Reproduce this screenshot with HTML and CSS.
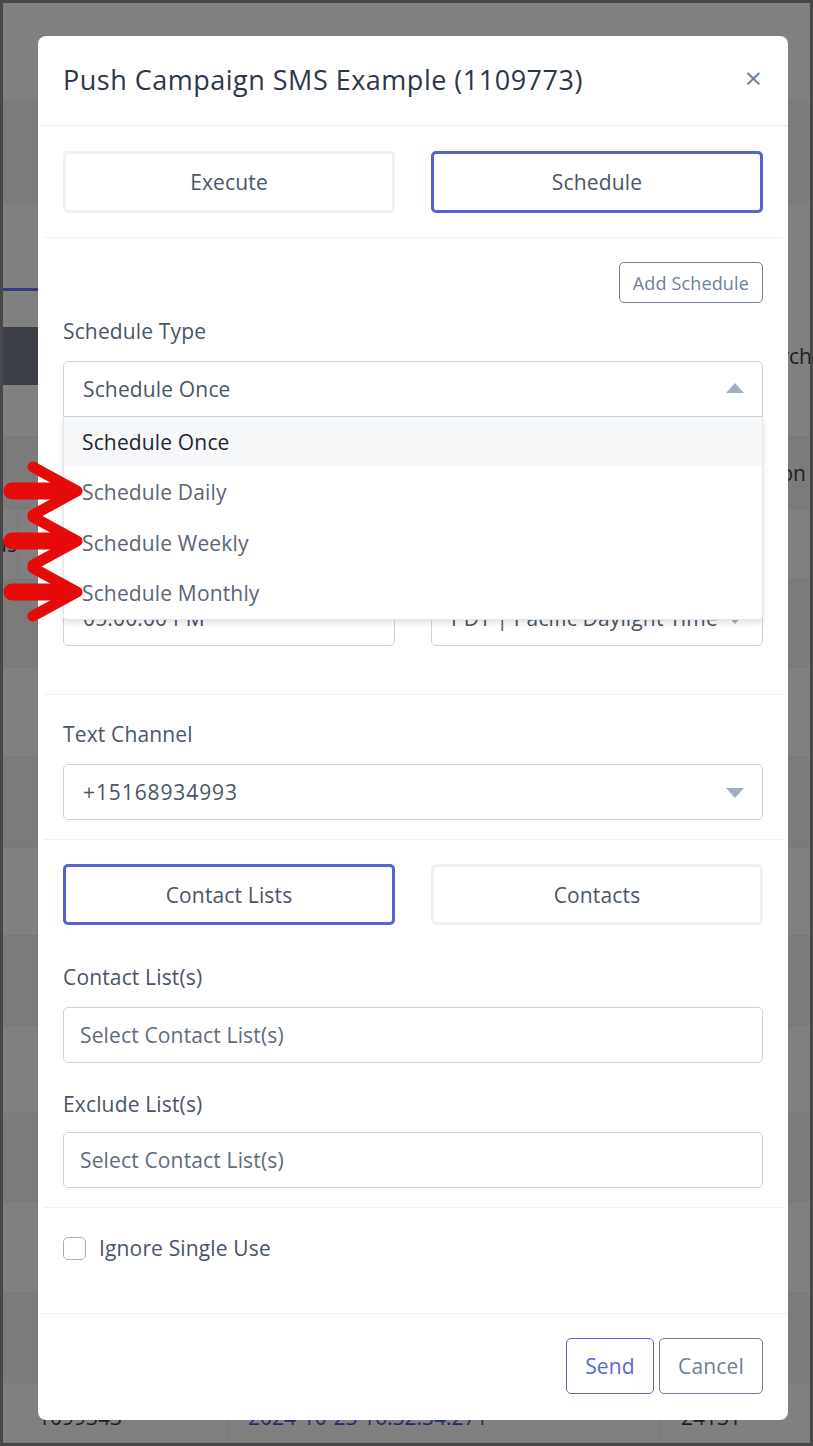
FILE: index.html
```html
<!DOCTYPE html>
<html lang="en">
<head>
<meta charset="utf-8">
<title>Push Campaign SMS Example</title>
<link rel="stylesheet" href="styles.css">
</head>
<body>
<div class="frame">
  <div class="page">
    <div class="band h97"></div>
    <div class="band h103 dim"></div>
    <div class="band h85"></div>
    <div class="tabline"></div>
    <div class="band h36"></div>
    <div class="band h58 toolbar">
      <div class="darkbtn"></div>
      <div class="search">Search</div>
    </div>
    <div class="band h52"></div>
    <div class="trow h72 dim"><span class="cell c1"></span><span class="cell c2"></span><span class="cell c3 txt-end">Action</span></div>
    <div class="trow h71"><span class="cell c1 txt-cut">Status</span><span class="cell c2"></span><span class="cell c3"></span></div>
    <div class="trow h88 dim"><span class="cell c1"></span><span class="cell c2"></span><span class="cell c3"></span></div>
    <div class="trow h89"><span class="cell c1"></span><span class="cell c2"></span><span class="cell c3"></span></div>
    <div class="trow h91 dim"><span class="cell c1"></span><span class="cell c2"></span><span class="cell c3"></span></div>
    <div class="trow h88"><span class="cell c1"></span><span class="cell c2"></span><span class="cell c3"></span></div>
    <div class="trow h90 dim"><span class="cell c1"></span><span class="cell c2"></span><span class="cell c3"></span></div>
    <div class="trow h88"><span class="cell c1"></span><span class="cell c2"></span><span class="cell c3"></span></div>
    <div class="trow h88 dim"><span class="cell c1"></span><span class="cell c2"></span><span class="cell c3"></span></div>
    <div class="trow h91"><span class="cell c1"></span><span class="cell c2"></span><span class="cell c3"></span></div>
    <div class="trow h90 dim"><span class="cell c1"></span><span class="cell c2"></span><span class="cell c3"></span></div>
    <div class="trow h60"><span class="cell c1"><span class="id">1099343</span></span><span class="cell c2"><span class="date">2024-10-23 16:32:34.271</span></span><span class="cell c3"><span class="id">24131</span></span></div>
  </div>

  <div class="modal">
    <div class="modal-header">
      <h1 class="modal-title">Push Campaign SMS Example (1109773)</h1>
      <span class="close">&#215;</span>
    </div>
    <div class="modal-body">
      <div class="section sec-mode">
        <div class="toggle-grid">
          <div class="toggle">Execute</div>
          <div class="toggle active">Schedule</div>
        </div>
      </div>

      <div class="section sec-schedule">
        <div class="add-row"><span class="btn-outline gray small">Add Schedule</span></div>
        <label class="label first">Schedule Type</label>
        <div class="select-wrap">
          <div class="select open"><span>Schedule Once</span><span class="caret up"></span></div>
          <div class="menu">
            <div class="menu-item hl">Schedule Once</div>
            <div class="menu-item">Schedule Daily</div>
            <div class="menu-item">Schedule Weekly</div>
            <div class="menu-item">Schedule Monthly</div>
          </div>
        </div>
        <div class="hidden-group">
          <label class="label">Start Date</label>
          <div class="input"><span>10/24/2024</span></div>
        </div>
        <div class="two-col">
          <div class="input"><span>05:00:00 PM</span></div>
          <div class="select"><span>PDT | Pacific Daylight Time</span><span class="caret down"></span></div>
        </div>
      </div>

      <div class="section sec-channel">
        <label class="label">Text Channel</label>
        <div class="select"><span class="digits">+15168934993</span><span class="caret down"></span></div>
      </div>

      <div class="section sec-contacts">
        <div class="toggle-grid short">
          <div class="toggle active">Contact Lists</div>
          <div class="toggle">Contacts</div>
        </div>
        <label class="label gap-big">Contact List(s)</label>
        <div class="input placeholder"><span>Select Contact List(s)</span></div>
        <label class="label gap-mid">Exclude List(s)</label>
        <div class="input placeholder"><span>Select Contact List(s)</span></div>
      </div>

      <div class="section sec-check">
        <div class="check-row"><span class="checkbox"></span><span>Ignore Single Use</span></div>
      </div>
    </div>
    <div class="modal-footer">
      <span class="btn-outline blue send">Send</span>
      <span class="btn-outline gray cancel">Cancel</span>
    </div>
  </div>

  <svg class="arrows" width="100" height="200" viewBox="0 0 100 200" aria-hidden="true">
    <g fill="none" stroke="#e60a0a" stroke-linecap="round" stroke-linejoin="round">
      <line x1="12" y1="38" x2="60" y2="38" stroke-width="17"/>
      <polyline points="33,14 77,38 33,62" stroke-width="11"/>
      <line x1="12" y1="88" x2="60" y2="88" stroke-width="17"/>
      <polyline points="33,64 77,88 33,112" stroke-width="11"/>
      <line x1="12" y1="139" x2="60" y2="139" stroke-width="17"/>
      <polyline points="33,115 77,139 33,163" stroke-width="11"/>
    </g>
  </svg>
</div>
</body>
</html>
```

FILE: styles.css
```css
* { box-sizing: border-box; }
html, body { margin: 0; padding: 0; }
body {
  font-family: "Open Sans", "Noto Sans", sans-serif;
  background: #474747;
}
.frame {
  position: relative;
  width: 813px;
  height: 1446px;
  border: 3px solid #474747;
  overflow: hidden;
  background: #808080;
}

/* dimmed background page */
.page { display: flex; flex-direction: column; }
.band { background: #808080; }
.dim { background: #7b7b7b; }
.h97 { height: 97px; }
.h103 { height: 103px; }
.h85 { height: 85px; }
.h36 { height: 36px; }
.h58 { height: 58px; }
.h52 { height: 52px; border-bottom: 1px solid #767676; }
.h60 { height: 60px; }
.h71 { height: 71px; }
.h72 { height: 72px; }
.h88 { height: 88px; }
.h89 { height: 89px; }
.h90 { height: 90px; }
.h91 { height: 91px; }
.tabline { height: 3px; width: 300px; background: #353a78; }
.toolbar { display: flex; justify-content: space-between; align-items: center; }
.darkbtn { width: 160px; height: 58px; background: #3b3e47; }
.search { font-size: 21px; color: #1f1f1f; margin-right: -2px; }
.trow {
  display: grid;
  grid-template-columns: 15px 210px 433px 1fr;
  background: #808080;
  border-bottom: 1px solid #777;
  font-size: 21px;
  color: #1f1f1f;
}
.trow.dim { background: #7b7b7b; }
.cell { border-right: 1px solid #777; display: flex; align-items: center; overflow: hidden; white-space: nowrap; }
.cell.c1 { grid-column: 2; padding-left: 20px; }
.cell.c2 { padding-left: 20px; }
.cell.c3 { padding-left: 20px; border-right: none; }
.txt-end { justify-content: flex-end; padding-right: 4px; }
.trow .c1.txt-cut { grid-column: 1; grid-row: 1; padding-left: 0; justify-content: flex-end; border-right: 1px solid #777; }
.h60 .cell { align-items: flex-start; padding-top: 20px; }
.id { color: #1f1f1f; }
.date { color: #262b6b; }

/* modal */
.modal {
  position: absolute;
  left: 35px;
  top: 33px;
  width: 750px;
  background: #fff;
  border-radius: 8px;
  color: #4a5568;
  letter-spacing: 0.15px;
}
.modal-header {
  height: 90px;
  padding: 0 25px;
  display: flex;
  align-items: center;
  justify-content: space-between;
  border-bottom: 1px solid #e9ecef;
}
.modal-title {
  margin: 0;
  font-size: 27px;
  font-weight: 400;
  letter-spacing: 0.5px;
  color: #2d3748;
  margin-top: -3px;
}
.close { font-size: 30px; color: #718096; line-height: 1; margin-right: 1px; margin-top: -6px; }
.modal-body { padding: 0 6px; }
.section { border-bottom: 1px solid #edf2f7; padding: 24px 19px; }
.sec-mode { padding-top: 25px; padding-bottom: 24px; }
.sec-schedule { padding-bottom: 48px; }
.sec-channel { padding-bottom: 19px; }
.sec-contacts { padding-bottom: 19px; }
.sec-check { border-bottom: none; padding-top: 25px; padding-bottom: 50px; }

.toggle-grid { display: grid; grid-template-columns: 1fr 1fr; gap: 36px; }
.toggle {
  height: 62px;
  border: 3px solid #edf2f7;
  border-radius: 5px;
  display: flex;
  align-items: center;
  justify-content: center;
  font-size: 21px;
  color: #4a5568;
}
.toggle.active { border-color: #5462d2; }
.toggle-grid.short .toggle { height: 61px; }

.add-row { display: flex; justify-content: flex-end; }
.btn-outline {
  display: inline-flex;
  align-items: center;
  justify-content: center;
  border: 1px solid #718096;
  border-radius: 5px;
  color: #718096;
  font-size: 21px;
}
.btn-outline.small { height: 41px; padding: 0 13px; font-size: 18px; }
.btn-outline.blue { border-color: #5a67d8; color: #5a67d8; }

.label { display: block; font-size: 21px; line-height: 30px; height: 30px; margin-bottom: 15px; color: #4a5568; }
.label.first { margin-top: 13px; }
.label.gap-big { margin-top: 37px; }
.label.gap-mid { margin-top: 26px; margin-bottom: 13px; }

.select, .input {
  height: 56px;
  border: 1px solid #cdd3dc;
  border-radius: 5px;
  padding: 0 18px 0 19px;
  display: flex;
  align-items: center;
  justify-content: space-between;
  font-size: 21px;
  color: #4a5568;
  white-space: nowrap;
  overflow: hidden;
}
.digits { letter-spacing: 0.9px; }
.placeholder { color: #5f6b7c; padding-left: 16px; }
.select.open { border-radius: 5px 5px 0 0; }
.caret { width: 0; height: 0; border-left: 9px solid transparent; border-right: 9px solid transparent; flex: none; }
.caret.up { border-bottom: 10px solid #a0aec0; margin-top: -2px; }
.caret.down { border-top: 10px solid #a0aec0; margin-top: 2px; }

.select-wrap { position: relative; }
.menu {
  position: absolute;
  left: 0;
  right: 0;
  top: 100%;
  z-index: 2;
  background: #fff;
  border: 1px solid #e2e6eb;
  border-top: none;
  border-radius: 0 0 4px 4px;
  box-shadow: 0 3px 6px rgba(0, 0, 0, 0.12);
}
.menu-item {
  height: 50.5px;
  display: flex;
  align-items: center;
  padding-left: 18px;
  font-size: 21px;
  color: #5b6576;
}
.menu-item.hl { background: #f7f8fa; color: #1f2633; height: 50px; }

.hidden-group { margin-top: 26px; }
.two-col { display: grid; grid-template-columns: 1fr 1fr; gap: 36px; margin-top: 46px; }

.check-row { display: flex; align-items: center; height: 30px; font-size: 21px; color: #4a5568; }
.checkbox { width: 23px; height: 23px; border: 1px solid #a0aec0; border-radius: 5px; margin-right: 13px; flex: none; }

.modal-footer {
  border-top: 1px solid #edf2f7;
  padding: 24px 25px 26px;
  display: flex;
  justify-content: flex-end;
  gap: 5px;
}
.modal-footer .btn-outline { height: 56px; }
.send { width: 88px; }
.cancel { width: 104px; }

.arrows { position: absolute; left: -3px; top: 450px; z-index: 5; }
```
